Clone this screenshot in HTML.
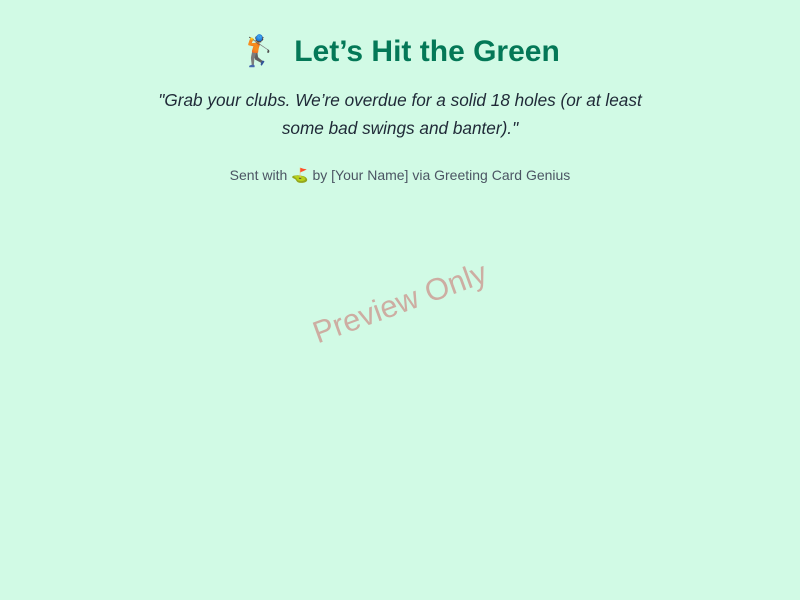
<!DOCTYPE html>
<html><head><meta charset="utf-8"><style>
html,body{margin:0;padding:0;width:800px;height:600px;background:#d1fae5;overflow:hidden;font-family:"Liberation Sans","DejaVu Sans",sans-serif;}
h1{position:absolute;top:32px;left:0;width:800px;margin:0;text-align:center;font-size:30px;font-weight:bold;color:#047857;line-height:40px;}
.q{position:absolute;top:86px;left:150px;width:500px;text-align:center;font-style:italic;font-size:17.2px;line-height:28px;color:#1f2937;}
.f{position:absolute;top:165px;left:0;width:800px;text-align:center;font-size:14px;color:#4b5563;line-height:20px;}
.w{position:absolute;left:290px;top:283px;width:220px;text-align:center;font-size:31px;color:rgba(200,80,80,0.45);transform:rotate(-20deg);line-height:40px;}
</style></head><body>
<h1>🏌️&nbsp; Let’s Hit the Green</h1>
<div class="q">"Grab your clubs. We’re overdue for a solid 18 holes (or at least some bad swings and banter)."</div>
<div class="f">Sent with ⛳ by [Your Name] via Greeting Card Genius</div>
<div class="w">Preview Only</div>
</body></html>
